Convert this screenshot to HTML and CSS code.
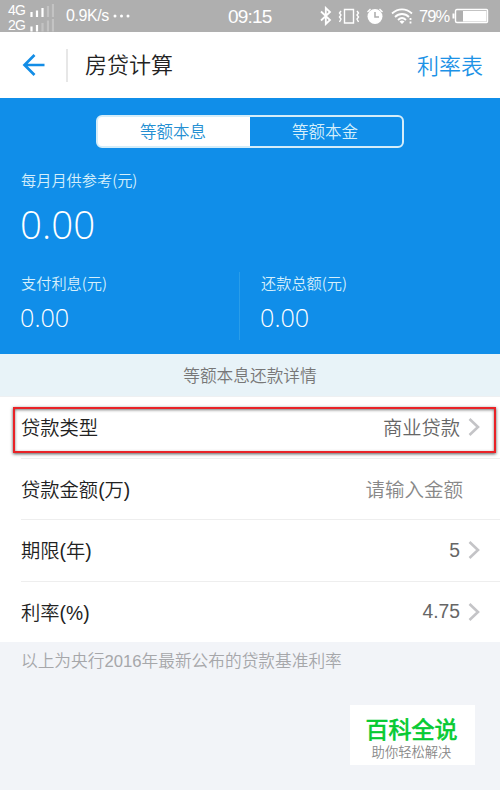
FILE: index.html
```html
<!DOCTYPE html>
<html lang="zh-CN">
<head>
<meta charset="utf-8">
<title>房贷计算</title>
<link rel="stylesheet" href="styles.css">
</head>
<body>
<header class="status">
  <div class="networks">
    <div class="network"><span>4G</span><svg width="26" height="14" viewBox="0 0 26 14"><path class="on" d="M3.500 9v5M9 7.500v6.500M14.500 5v9"/><path class="off" d="M20 3v11M25 1v13"/></svg></div>
    <div class="network"><span>2G</span><svg width="26" height="14" viewBox="0 0 26 14"><path class="on" d="M3.500 8.500v5M9 7v6.500"/><path class="off" d="M14.500 5v8.500M20 2.500v11M25 1v12.500"/></svg></div>
  </div>
  <span class="speed">0.9K/s</span>
  <svg class="dots" width="18" height="4" viewBox="0 0 18 4"><circle cx="2" cy="2" r="1.500"/><circle cx="8.500" cy="2" r="1.500"/><circle cx="15" cy="2" r="1.500"/></svg>
  <span class="clock">09:15</span>
  <svg class="status-icons" width="93" height="20" viewBox="0 0 93 20">
    <path class="arc" d="M1 5.500l9 8.500L5.800 18V2L10 6l-9 8.500"/>
    <path class="line" d="M24.500 3.500h9v13.500h-9zM21 5l-1.500 2 1.500 2-1.500 2 1.500 2-1.500 3M37 5l1.500 2L37 9l1.500 2L37 13l1.500 3"/>
    <circle class="solid" cx="55" cy="10.500" r="7.500"/>
    <path class="line" d="M47.500 6l3-3M62.500 6l-3-3"/>
    <path class="cutout" d="M55 6v5h4"/>
    <path class="arc" d="M72 7.500c6-5.500 14-5.500 20 0M75 11c4-4 10-4 14 0M78 14c2.500-2.500 5.500-2.500 8 0"/>
    <path class="solid" d="M79.500 15.500q2.500-2 5 0L82 18z"/>
    <path class="arc" d="M90.500 12v2M90.500 15.500v2"/>
  </svg>
  <span class="percent">79%</span>
  <svg class="battery" width="37" height="16" viewBox="0 0 37 16"><path class="line" d="M5 1.500h29.500q1 0 1 1v11q0 1-1 1H5q-1.500 0-1.500-1.500V3q0-1.500 1.500-1.500z"/><path class="solid" d="M0.500 5.500h2v5h-2zM11 3h23.500v10.500H11z"/></svg>
</header>
<nav class="nav">
  <svg class="back" width="24" height="24" viewBox="0 0 24 24"><path d="M22.500 12H2M12.500 2L2.500 12l10 10"/></svg>
  <h1 class="title">房贷计算</h1>
  <a class="rates">利率表</a>
</nav>
<section class="summary">
  <div class="tabs"><span class="tab active">等额本息</span><span class="tab">等额本金</span></div>
  <div class="monthly"><p class="label">每月月供参考(元)</p><p class="amount big">0.00</p></div>
  <div class="totals">
    <div class="total"><p class="label">支付利息(元)</p><p class="amount">0.00</p></div>
    <div class="total second"><p class="label">还款总额(元)</p><p class="amount">0.00</p></div>
  </div>
</section>
<div class="detail">等额本息还款详情</div>
<main class="rows">
  <div class="row"><span>贷款类型</span><span class="value">商业贷款</span><svg class="chevron" width="12" height="20" viewBox="0 0 12 20"><path d="M1.500 2l8.500 8-8.500 8"/></svg><i class="highlight"></i></div>
  <div class="row"><span>贷款金额<span class="latin">(</span>万<span class="latin">)</span></span><span class="value placeholder">请输入金额</span></div>
  <div class="row"><span>期限<span class="latin">(</span>年<span class="latin">)</span></span><span class="value latin">5</span><svg class="chevron" width="12" height="20" viewBox="0 0 12 20"><path d="M1.500 2l8.500 8-8.500 8"/></svg></div>
  <div class="row"><span>利率<span class="latin">(%)</span></span><span class="value latin">4.75</span><svg class="chevron" width="12" height="20" viewBox="0 0 12 20"><path d="M1.500 2l8.500 8-8.500 8"/></svg></div>
</main>
<p class="note">以上为央行<span class="latin">2016</span>年最新公布的贷款基准利率</p>
<aside class="brand"><strong>百科全说</strong><span>助你轻松解决</span></aside>
</body>
</html>
```
FILE: styles.css
```css
* { box-sizing: border-box; }
body {
  margin: 0;
  width: 500px;
  height: 790px;
  overflow: hidden;
  display: flex;
  flex-direction: column;
  background: #f2f4f8;
  color: #222;
  font-family: "Noto Sans CJK SC", sans-serif;
  font-weight: 350;
}
p, h1 { margin: 0; font-weight: inherit; }
svg { display: block; flex: none; fill: none; }
.latin { font-family: "Liberation Sans", sans-serif; line-height: 1; }

.status {
  height: 32px;
  flex: none;
  display: flex;
  align-items: center;
  background: #afafaf;
  color: #fff;
  font-family: "Liberation Sans", sans-serif;
  font-weight: 400;
}
.networks { width: 58px; padding: 2px 0 0 8px; }
.network { display: flex; height: 15px; align-items: center; font-size: 14px; letter-spacing: -0.900px; }
.network span { width: 20px; }
.network svg { stroke-width: 2.200; }
.on { stroke: #fff; }
.off { stroke: #c3c3c3; }
.speed { width: 55px; padding-left: 8px; font-size: 16px; letter-spacing: -0.400px; white-space: nowrap; }
.dots { fill: #fff; }
.clock { margin-left: 97px; width: 46px; font-size: 19px; letter-spacing: -0.800px; white-space: nowrap; padding-top: 1px; }
.status-icons { margin-left: 46px; }
.line { stroke: #fff; stroke-width: 1.400; }
.arc { stroke: #fff; stroke-width: 1.800; }
.solid { fill: #fff; }
.cutout { stroke: #afafaf; stroke-width: 1.600; }
.percent { margin-left: 5px; width: 33px; font-size: 16.500px; letter-spacing: -0.900px; padding-left: 1px; }
.battery { margin-left: 1px; }

.nav { height: 66px; flex: none; display: flex; align-items: center; padding: 0 17px 0 22px; background: #fff; }
.back { stroke: #138de6; stroke-width: 2.700; }
.title { margin-left: 20px; padding-left: 17px; border-left: 2px solid #e7e7e7; height: 33px; line-height: 29px; font-size: 22px; }
.rates { margin-left: auto; color: #1d92e6; font-size: 22px; height: 33px; line-height: 31px; }

.summary { height: 256px; flex: none; padding: 17px 21px 0; background: #108ee9; color: #d5effb; }
.tabs { display: flex; width: 308px; height: 33px; margin-left: 75px; border: 2px solid #d5edf9; border-radius: 6px; background: linear-gradient(90deg, #fff 50%, transparent 50%); overflow: hidden; }
.tab { flex: 1; text-align: center; font-size: 16.500px; line-height: 29px; position: relative; left: -1px; }
.active { color: #258fd2; }
.monthly { height: 124px; padding-top: 20px; }
.label { font-size: 15.200px; line-height: 22px; }
.amount { color: #fff; font-family: "Open Sans", sans-serif; font-weight: 330; font-size: 25.200px; line-height: 36px; margin: 5px 0 0 -1px; }
.big { font-size: 38.500px; line-height: 56px; margin: 6px 0 0 -1px; }
.totals { display: flex; height: 68px; }
.totals .label { line-height: 20px; padding-bottom: 2px; }
.total { width: 218px; }
.second { border-left: 1px solid #299de9; padding-left: 21px; }

.detail { height: 43px; flex: none; background: #e8f3f8; border-bottom: 1px solid #eef0f2; text-align: center; font-size: 16.700px; line-height: 43px; color: #777; }
.rows { background: #fff; flex: none; padding-left: 21px; }
.row { position: relative; height: 61.500px; padding-right: 20px; border-bottom: 1px solid #eee; display: flex; align-items: center; font-size: 19.300px; line-height: 28px; }
.row:last-child { height: 60px; border-bottom: 0; }
.value { margin-left: auto; margin-right: 8px; color: #666; }
.value.latin { font-size: 19.300px; padding-top: 1px; }
.placeholder { margin-right: 17px; color: #888; font-size: 19.500px; }
.chevron { stroke: #c4c4c7; stroke-width: 2.600; }
.highlight { position: absolute; left: -8px; top: 10px; width: 483px; height: 46px; border: 2px solid #e92227; box-shadow: 0 1px 3px #555, inset 0 1px 3px #777; }
.note { padding: 6px 21px 0; color: #a6a7aa; font-size: 16.700px; line-height: 24px; }
.brand { width: 125px; height: 60px; margin: auto 25px 25px auto; padding: 9px 2px 0 0; background: #fff; display: flex; flex-direction: column; align-items: center; color: #888; font-size: 13.300px; line-height: 17px; }
.brand strong { color: #05ca32; font-size: 23px; line-height: 29px; font-weight: 400; -webkit-text-stroke: 0.700px #05ca32; }
```
